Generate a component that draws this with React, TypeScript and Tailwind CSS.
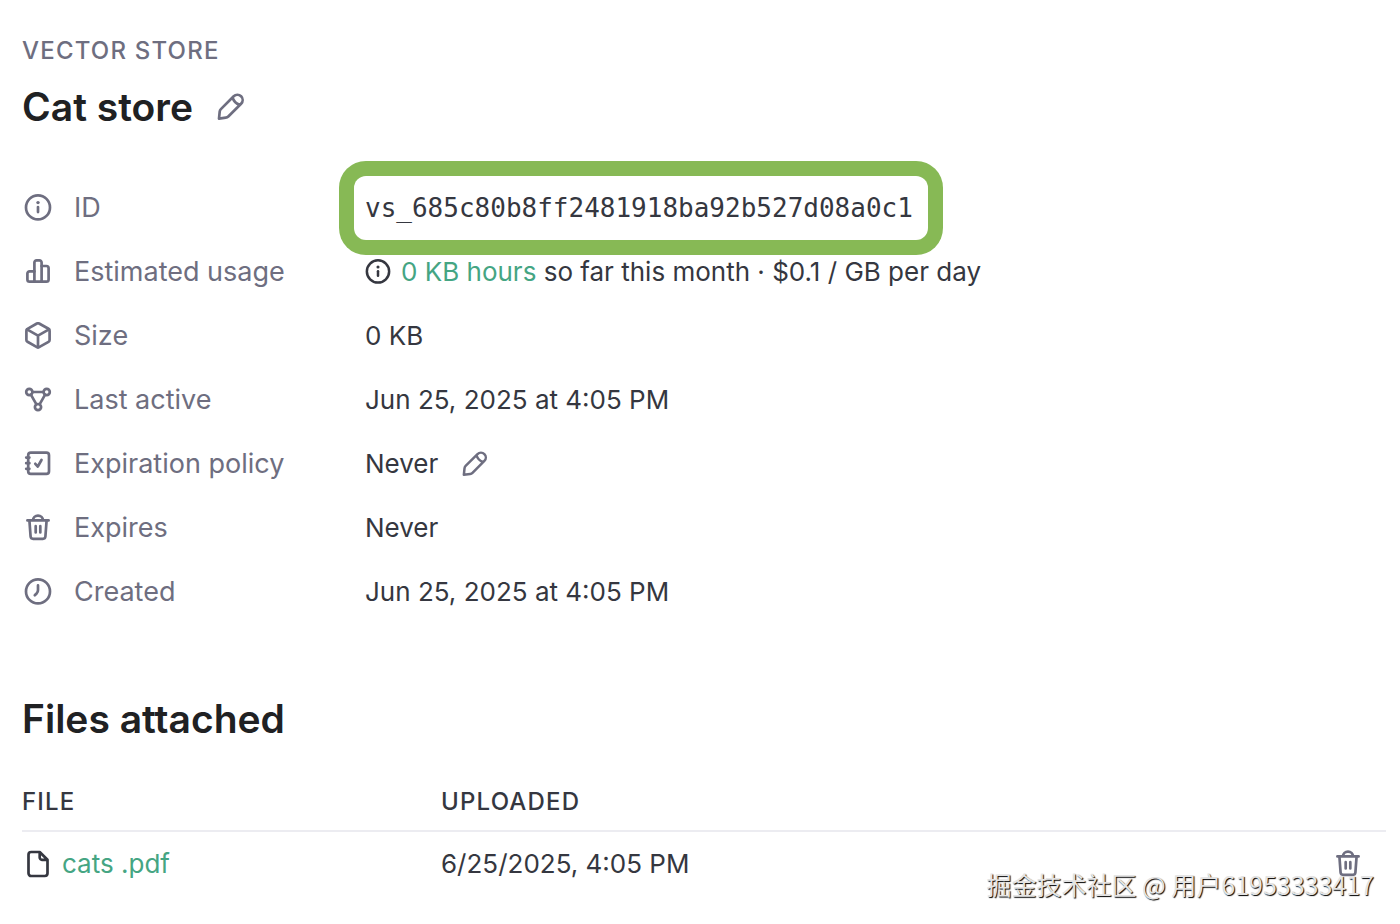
import React from 'react';
import clsx from 'clsx';

type IconProps = { className?: string };

function Icon({ className, children }: IconProps & { children: React.ReactNode }) {
  return (
    <svg
      viewBox="0 0 28 28"
      fill="none"
      stroke="currentColor"
      strokeWidth="2.7"
      strokeLinecap="round"
      strokeLinejoin="round"
      aria-hidden="true"
      className={clsx('shrink-0', className ?? 'size-7')}
    >
      {children}
    </svg>
  );
}

function InfoIcon({ className }: IconProps) {
  return (
    <Icon className={className}>
      <circle cx="14" cy="13.4" r="12" />
      <path d="M14 13.1v5" />
      <circle cx="14" cy="8.6" r="1.7" fill="currentColor" stroke="none" />
    </Icon>
  );
}

function BarsIcon() {
  return (
    <Icon>
      <path d="M10.4 23.6H5.6a2.2 2.2 0 0 1-2.2-2.2v-5.8a2.2 2.2 0 0 1 2.2-2.2h4.8M17.6 8h4.8a2.2 2.2 0 0 1 2.2 2.2v11.2a2.2 2.2 0 0 1-2.2 2.2h-4.8" />
      <path d="M10.4 23.6v-19a2.2 2.2 0 0 1 2.2-2.2h2.8a2.2 2.2 0 0 1 2.2 2.2v19z" />
    </Icon>
  );
}

function CubeIcon() {
  return (
    <Icon>
      <path d="M12.9 1.5a2.2 2.2 0 0 1 2.2 0l9.4 5.3a2.2 2.2 0 0 1 1.1 1.9v9.2a2.2 2.2 0 0 1-1.1 1.9l-9.4 5.3a2.2 2.2 0 0 1-2.2 0l-9.4-5.3a2.2 2.2 0 0 1-1.1-1.9V8.7a2.2 2.2 0 0 1 1.1-1.9z" />
      <path d="M3 7.4l11 6.2 11-6.2M14 13.6v11.6" />
    </Icon>
  );
}

function NodesIcon() {
  return (
    <Icon>
      <circle cx="5.3" cy="6" r="3.1" />
      <circle cx="22.7" cy="6" r="3.1" />
      <circle cx="14" cy="21.1" r="3.1" />
      <path d="M8.4 6h11.2M6.9 8.7l5.5 9.6M21.1 8.7l-5.5 9.6" />
    </Icon>
  );
}

function PolicyIcon() {
  return (
    <Icon>
      <rect x="4.2" y="2.6" width="20.8" height="21.2" rx="2.6" />
      <path d="M2.2 7.6h3.2M2.2 13.2h3.2M2.2 18.8h3.2M11.3 13.8l2.5 2.7 3.7-6.5" />
    </Icon>
  );
}

function TrashIcon() {
  return (
    <Icon>
      <path d="M3.4 6.4h21.200M5.4 6.4l1.2 16.1a2.5 2.5 0 0 0 2.5 2.3h9.8a2.5 2.5 0 0 0 2.5-2.3l1.2-16.1M9 6.4a5 4.7 0 0 1 10 0M11.7 12.2v6.2M16.3 12.2v6.2" />
    </Icon>
  );
}

function ClockIcon() {
  return (
    <Icon>
      <circle cx="14" cy="13.4" r="12" />
      <path d="M14 7.4v4.5a5 5 0 0 1-1.2 3.3l-2 2" />
    </Icon>
  );
}

function PencilIcon({ className }: IconProps) {
  return (
    <Icon className={className}>
      <path d="M2 25.600l.7-7a4 4 0 0 1 1.200-2.500L16.700 3.300a5.200 5.200 0 0 1 7.400 7.400L11.300 23.500a4 4 0 0 1-2.500 1.200zM15.600 4.800c1.200 3.600 3.500 5.900 7.100 7.100" />
    </Icon>
  );
}

function FileIcon() {
  return (
    <Icon>
      <path d="M15.7 2H7.2a2.7 2.7 0 0 0-2.7 2.7v18.6A2.7 2.7 0 0 0 7.2 26h13.6a2.7 2.7 0 0 0 2.7-2.7V9.8zM15.7 2v5.6a2.2 2.2 0 0 0 2.2 2.2h5.6" />
    </Icon>
  );
}

function Row({ icon, label, children }: { icon: React.ReactNode; label: string; children: React.ReactNode }) {
  return (
    <div className="flex h-16 items-center">
      <dt className="flex w-[332px] shrink-0 items-center gap-[22px] pl-0.5 text-[27px] text-[#6e6e80]">
        {icon}
        {label}
      </dt>
      <dd className="flex h-full items-center">{children}</dd>
    </div>
  );
}

const valueClass = 'flex items-center px-[11px]';

export default function App() {
  return (
    <main className="relative min-h-screen bg-white pt-[33px] pr-[14px] pb-6 pl-[22px] font-['Inter',sans-serif] text-[26px] leading-9 text-[#353740]">
      <p className="text-[24px] font-medium tracking-wider text-[#6e6e80]">VECTOR STORE</p>
      <div className="mt-[14px] flex items-center gap-6">
        <h1 className="text-[39px] leading-12 font-semibold text-[#202123]">Cat store</h1>
        <button type="button" aria-label="Edit name" className="text-[#6e6e80]">
          <PencilIcon />
        </button>
      </div>

      <dl className="mt-[45px]">
        <Row icon={<InfoIcon />} label="ID">
          <code className="flex h-full items-center rounded-xl pr-[15px] pl-[11px] font-['DejaVu_Sans_Mono',monospace] text-[26px] ring-[15px] ring-[#87b955]">
            vs_685c80b8ff2481918ba92b527d08a0c1
          </code>
        </Row>
        <Row icon={<BarsIcon />} label="Estimated usage">
          <div className={valueClass}>
            <InfoIcon className="mr-2.5 size-[26px]" />
            <p>
              <a href="#usage" className="text-[#45a583]">0 KB hours</a> so far this month · $0.1 / GB per day
            </p>
          </div>
        </Row>
        <Row icon={<CubeIcon />} label="Size">
          <div className={valueClass}>0 KB</div>
        </Row>
        <Row icon={<NodesIcon />} label="Last active">
          <div className={valueClass}>Jun 25, 2025 at 4:05 PM</div>
        </Row>
        <Row icon={<PolicyIcon />} label="Expiration policy">
          <div className={clsx(valueClass, 'gap-6')}>
            Never
            <button type="button" aria-label="Edit expiration policy" className="text-[#6e6e80]">
              <PencilIcon className="size-[26px]" />
            </button>
          </div>
        </Row>
        <Row icon={<TrashIcon />} label="Expires">
          <div className={valueClass}>Never</div>
        </Row>
        <Row icon={<ClockIcon />} label="Created">
          <div className={valueClass}>Jun 25, 2025 at 4:05 PM</div>
        </Row>
      </dl>

      <h2 className="mt-[71px] text-[39px] leading-12 font-semibold text-[#202123]">Files attached</h2>
      <table className="mt-9 w-full table-fixed border-collapse text-left">
        <thead className="border-b-2 border-[#ececf1] text-[24px]">
          <tr>
            <th scope="col" className="w-[419px] pt-[5px] pb-[10px] font-medium tracking-wider">FILE</th>
            <th scope="col" className="pt-[5px] pb-[10px] font-medium tracking-wider">UPLOADED</th>
            <th scope="col" aria-label="Actions" className="w-16" />
          </tr>
        </thead>
        <tbody>
          <tr className="h-16">
            <td>
              <a href="#cats" className="flex items-center gap-[10px] pl-0.5 text-[#45a583]">
                <span className="text-[#353740]"><FileIcon /></span>
                cats .pdf
              </a>
            </td>
            <td>6/25/2025, 4:05 PM</td>
            <td>
              <button type="button" aria-label="Delete file" className="ml-3 block text-[#6e6e80]">
                <TrashIcon />
              </button>
            </td>
          </tr>
        </tbody>
      </table>

      <div className="pointer-events-none absolute right-[26px] bottom-[22px] font-['Noto_Sans_CJK_SC',sans-serif] text-[25px] leading-9 text-[#e4e4e4] [text-shadow:1px_1px_1px_#000]">
        掘金技术社区 @ 用户61953333417
      </div>
    </main>
  );
}
